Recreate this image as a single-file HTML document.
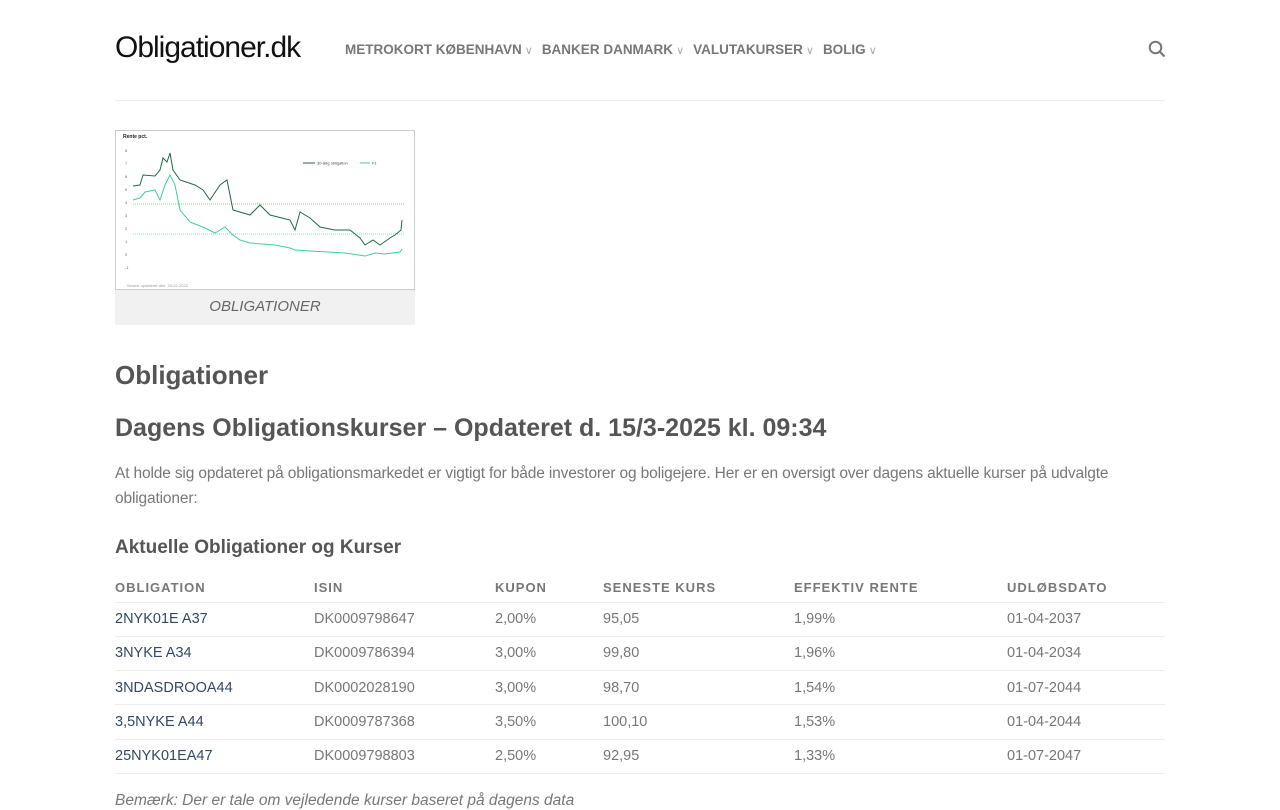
<!DOCTYPE html>
<html><head><meta charset="utf-8"><style>
*{margin:0;padding:0;box-sizing:border-box}
body{width:1280px;height:800px;overflow:hidden;background:#fff;font-family:"Liberation Sans",sans-serif;color:#777}
.hdr{position:absolute;left:115px;top:0;width:1050px;height:101px;border-bottom:1px solid #ececec}
.logo{position:absolute;left:0;top:31px;font-size:30px;color:#111;letter-spacing:-1px;font-weight:300}
.nav{position:absolute;left:230px;top:42px;font-size:13.5px;font-weight:bold;color:#777;letter-spacing:0}
.nav span{margin-right:9px}
.nav i{font-style:normal;font-weight:normal;color:#aaa;font-size:11px;margin-left:3px}
.fig{position:absolute;left:115px;top:130px;width:300px;height:195px;background:#f1f1f1}
.fig svg{display:block}
.cap{text-align:center;font-style:italic;font-size:15px;color:#666;margin-top:8px}
h1{position:absolute;left:115px;top:360px;font-size:26px;color:#555;font-weight:bold}
h2{position:absolute;left:115px;top:414px;font-size:25px;color:#555;font-weight:bold}
p.i{position:absolute;left:115px;top:461px;width:1040px;font-size:15.5px;line-height:25px;color:#777;letter-spacing:-0.15px}
h3{position:absolute;left:115px;top:537px;font-size:19px;color:#555;font-weight:bold}
table{position:absolute;left:115px;top:572px;width:1050px;border-collapse:collapse;font-size:14.5px}
th{text-align:left;font-size:13px;color:#777;letter-spacing:1px;height:30px;border-bottom:1px solid #ececec;font-weight:bold;padding-top:2px}
td{height:34.3px;border-bottom:1px solid #ececec;color:#777}
td:first-child{color:#334862}
.note{position:absolute;left:115px;top:792px;font-style:italic;font-size:15.5px;color:#777}
</style></head><body>
<div class="hdr">
<div class="logo">Obligationer.dk</div>
<div class="nav"><span>METROKORT KØBENHAVN<i>∨</i></span><span>BANKER DANMARK<i>∨</i></span><span>VALUTAKURSER<i>∨</i></span><span>BOLIG<i>∨</i></span></div>
<svg style="position:absolute;left:1033px;top:40px" width="18" height="18" viewBox="0 0 18 18"><circle cx="7.5" cy="7.5" r="5.8" fill="none" stroke="#777" stroke-width="2"/><path d="M12 12l4.5 4.5" stroke="#777" stroke-width="2.2"/></svg>
</div>
<div class="fig">
<svg width="300" height="160" viewBox="0 0 300 160"><rect x="0.5" y="0.5" width="299" height="159" fill="#fff" stroke="#ccc"/>
<text x="8" y="8" font-size="5" font-weight="bold" fill="#222">Rente pct.</text>
<g font-size="4" fill="#666"><text x="10" y="22">8</text><text x="10" y="35">7</text><text x="10" y="48">6</text><text x="10" y="61">5</text><text x="10" y="74">4</text><text x="10" y="87">3</text><text x="10" y="100">2</text><text x="10" y="113">1</text><text x="10" y="126">0</text><text x="10" y="139">-1</text></g>
<line x1="18" y1="74" x2="290" y2="74" stroke="#9c9" stroke-dasharray="1,1"/>
<line x1="18" y1="104" x2="290" y2="104" stroke="#9dc" stroke-dasharray="1,1"/>
<polyline fill="none" stroke="#1f6b45" stroke-width="1" points="18,56 25,55 28,45 40,46 45,40 48,28 52,32 55,23 58,40 65,50 80,55 88,60 95,70 105,55 112,50 118,80 135,85 145,75 155,85 175,90 180,100 185,82 195,88 205,97 220,100 235,100 245,108 250,115 258,110 265,115 275,108 280,105 286,100 287,90"/>
<polyline fill="none" stroke="#3ecf9a" stroke-width="1" points="18,70 25,68 30,62 40,60 45,70 50,55 55,45 60,55 65,80 75,92 90,98 100,103 110,97 118,105 125,110 135,113 160,115 175,118 180,120 195,121 230,123 250,126 260,123 270,124 285,122 287,119"/>
<line x1="188" y1="33" x2="200" y2="33" stroke="#1f6b45"/><text x="202" y="34.5" font-size="4" fill="#444">30-årig obligation</text>
<line x1="245" y1="33" x2="255" y2="33" stroke="#3ecf9a"/><text x="257" y="34.5" font-size="4" fill="#444">F1</text>
<text x="12" y="157" font-size="4" fill="#999">Senest opdateret den:       20-02-2022</text>
</svg>
<div class="cap">OBLIGATIONER</div>
</div>
<h1>Obligationer</h1>
<h2>Dagens Obligationskurser – Opdateret d. 15/3-2025 kl. 09:34</h2>
<p class="i">At holde sig opdateret på obligationsmarkedet er vigtigt for både investorer og boligejere. Her er en oversigt over dagens aktuelle kurser på udvalgte obligationer:</p>
<h3>Aktuelle Obligationer og Kurser</h3>
<table>
<tr><th style="width:199px">OBLIGATION</th><th style="width:181px">ISIN</th><th style="width:108px">KUPON</th><th style="width:191px">SENESTE KURS</th><th style="width:213px">EFFEKTIV RENTE</th><th>UDLØBSDATO</th></tr>
<tr><td>2NYK01E A37</td><td>DK0009798647</td><td>2,00%</td><td>95,05</td><td>1,99%</td><td>01-04-2037</td></tr>
<tr><td>3NYKE A34</td><td>DK0009786394</td><td>3,00%</td><td>99,80</td><td>1,96%</td><td>01-04-2034</td></tr>
<tr><td>3NDASDROOA44</td><td>DK0002028190</td><td>3,00%</td><td>98,70</td><td>1,54%</td><td>01-07-2044</td></tr>
<tr><td>3,5NYKE A44</td><td>DK0009787368</td><td>3,50%</td><td>100,10</td><td>1,53%</td><td>01-04-2044</td></tr>
<tr><td>25NYK01EA47</td><td>DK0009798803</td><td>2,50%</td><td>92,95</td><td>1,33%</td><td>01-07-2047</td></tr>
</table>
<div class="note">Bemærk: Der er tale om vejledende kurser baseret på dagens data</div>
</body></html>
